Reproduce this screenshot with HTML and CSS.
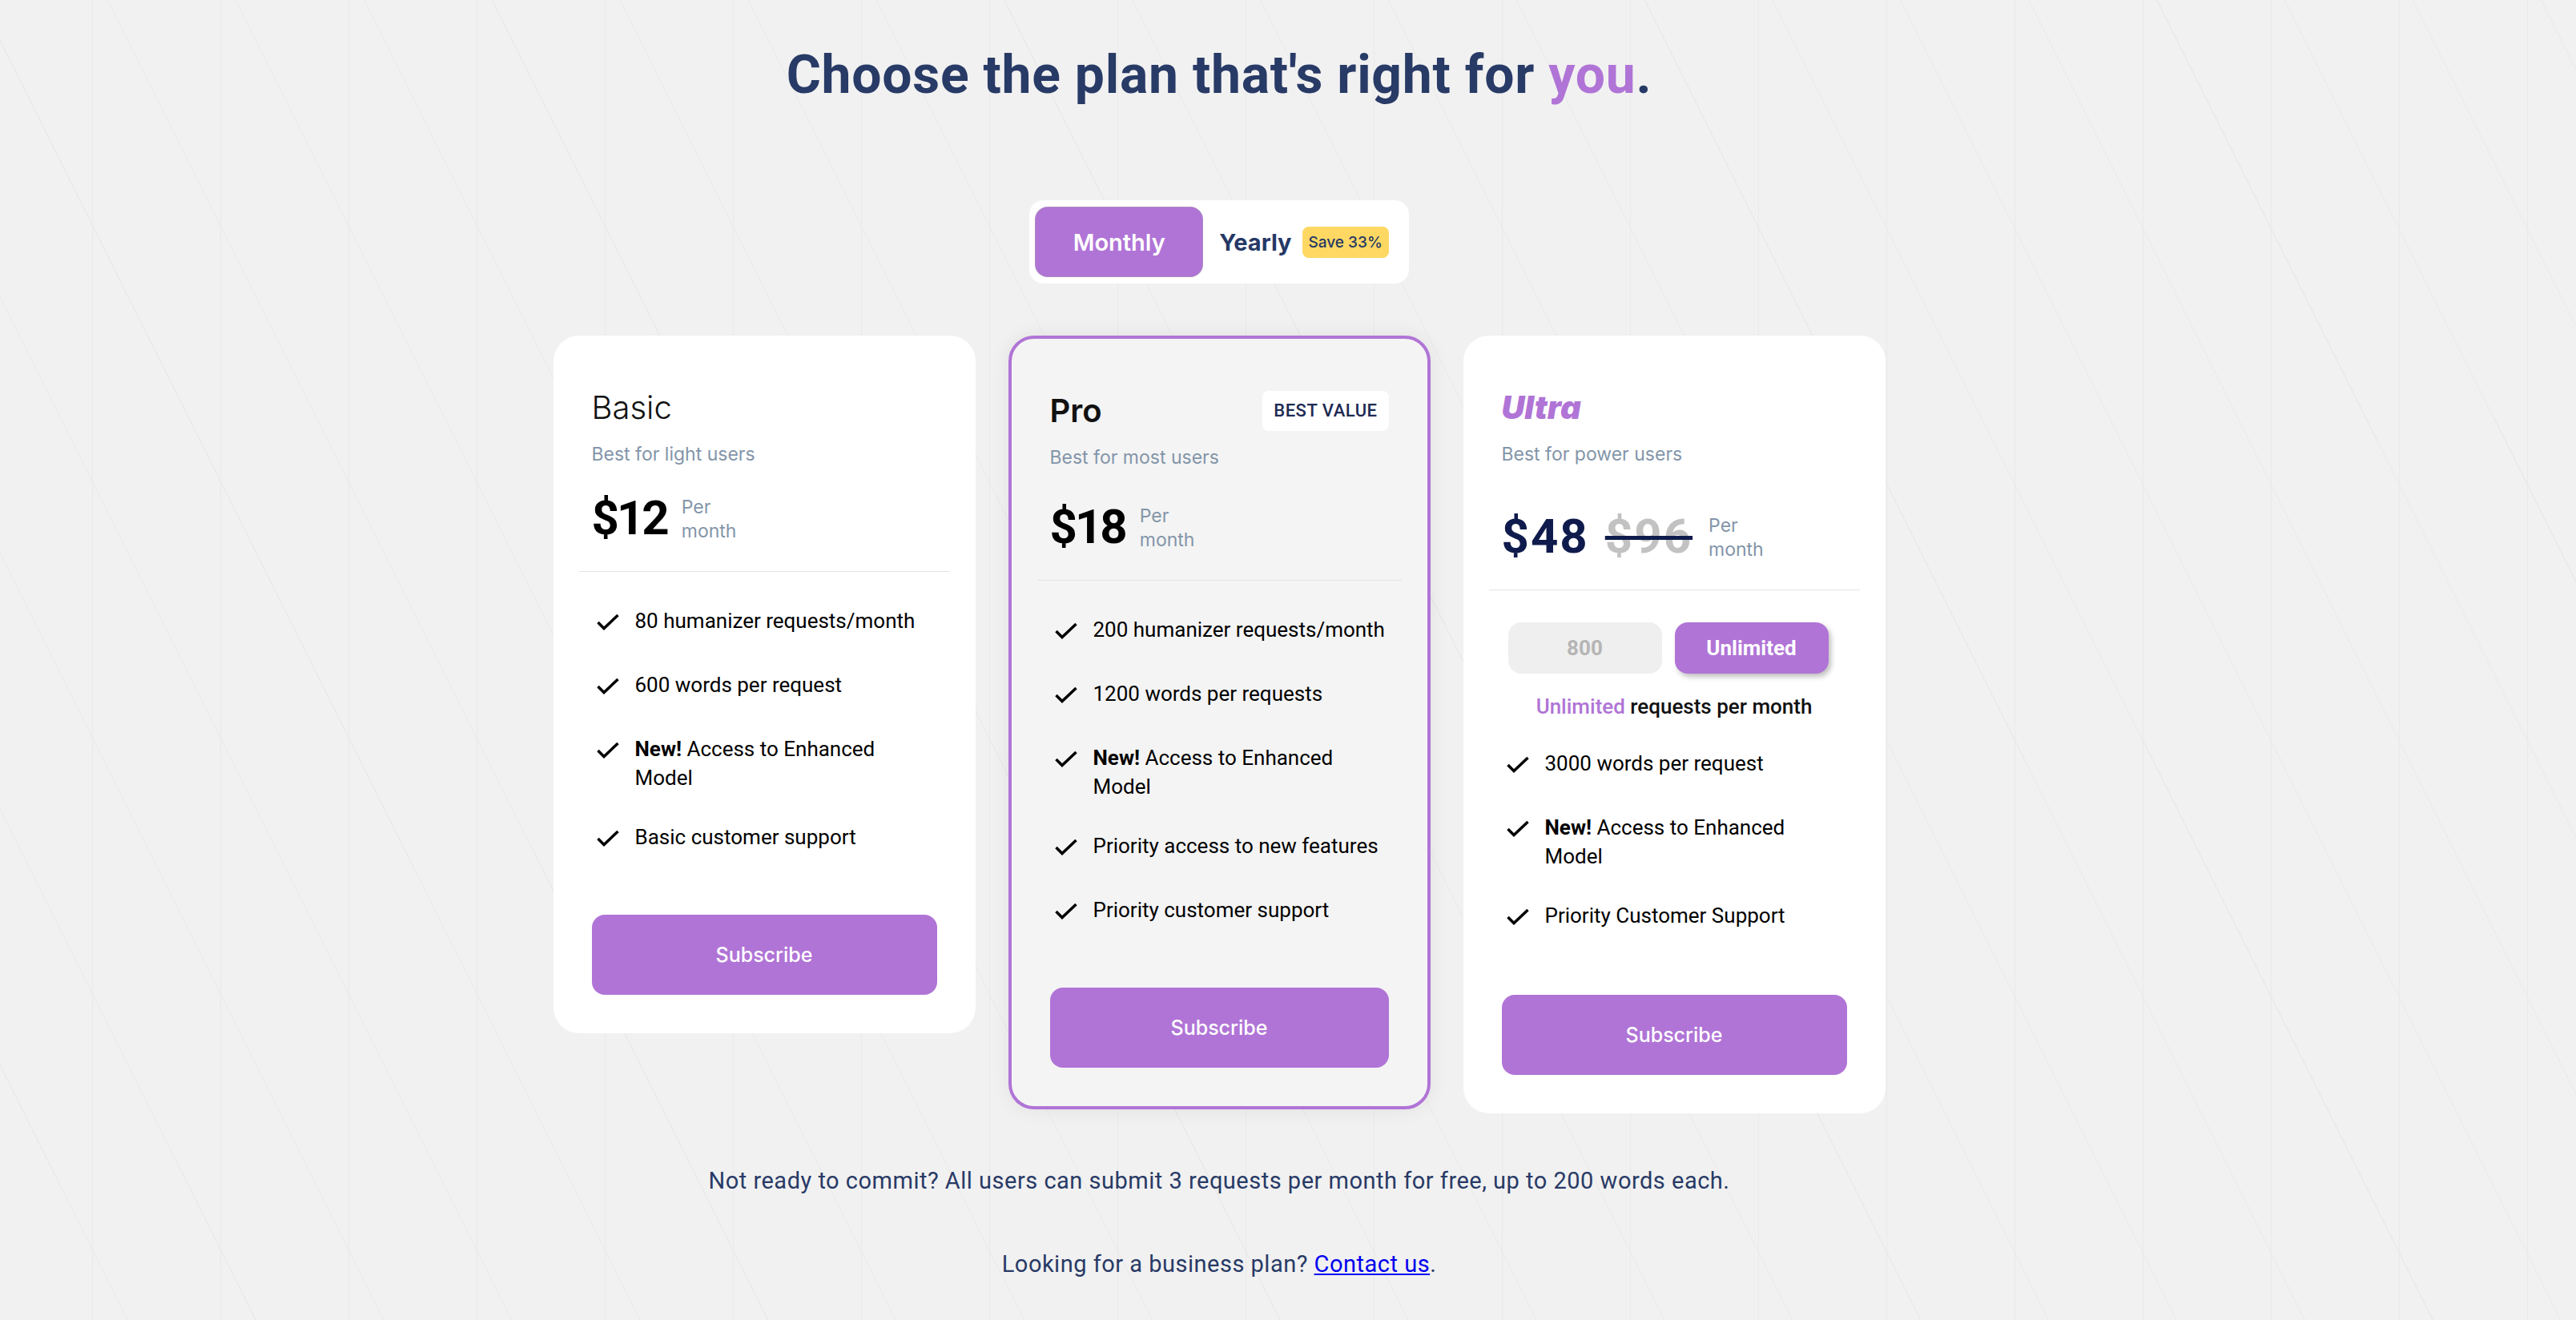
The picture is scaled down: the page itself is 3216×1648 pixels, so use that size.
FILE: index.html
```html
<!DOCTYPE html>
<html lang="en">
<head>
<meta charset="UTF-8">
<meta name="viewport" content="width=device-width, initial-scale=1.0">
<title>Pricing</title>
<link rel="stylesheet" href="styles.css">
</head>
<body>
    <main class="pricing">
        <h1 class="pricing-title">Choose the plan that's right for <span class="accent">you</span>.</h1>

        <div class="billing-toggle">
            <button class="billing-option active">Monthly</button>
            <button class="billing-option">Yearly</button>
            <span class="save-badge">Save 33%</span>
        </div>

        <div class="plans">
            <!-- Basic -->
            <div class="plan">
                <div class="plan-head">
                    <h2 class="plan-name">Basic</h2>
                </div>
                <p class="plan-tagline">Best for light users</p>
                <div class="plan-price">
                    <span class="price">$12</span>
                    <span class="price-period">Per<br>month</span>
                </div>
                <hr class="plan-divider">
                <ul class="plan-features">
                    <li><svg viewBox="0 0 40 42"><path d="M7.5 20 L15 27.5 L32.5 11"/></svg><span class="feature-text">80 humanizer requests/month</span></li>
                    <li><svg viewBox="0 0 40 42"><path d="M7.5 20 L15 27.5 L32.5 11"/></svg><span class="feature-text">600 words per request</span></li>
                    <li><svg viewBox="0 0 40 42"><path d="M7.5 20 L15 27.5 L32.5 11"/></svg><span class="feature-text"><b>New!</b> Access to Enhanced Model</span></li>
                    <li><svg viewBox="0 0 40 42"><path d="M7.5 20 L15 27.5 L32.5 11"/></svg><span class="feature-text">Basic customer support</span></li>
                </ul>
                <button class="subscribe-btn">Subscribe</button>
            </div>

            <!-- Pro -->
            <div class="plan plan-featured">
                <div class="plan-head">
                    <h2 class="plan-name">Pro</h2>
                    <span class="best-value">BEST VALUE</span>
                </div>
                <p class="plan-tagline">Best for most users</p>
                <div class="plan-price">
                    <span class="price">$18</span>
                    <span class="price-period">Per<br>month</span>
                </div>
                <hr class="plan-divider">
                <ul class="plan-features">
                    <li><svg viewBox="0 0 40 42"><path d="M7.5 20 L15 27.5 L32.5 11"/></svg><span class="feature-text">200 humanizer requests/month</span></li>
                    <li><svg viewBox="0 0 40 42"><path d="M7.5 20 L15 27.5 L32.5 11"/></svg><span class="feature-text">1200 words per requests</span></li>
                    <li><svg viewBox="0 0 40 42"><path d="M7.5 20 L15 27.5 L32.5 11"/></svg><span class="feature-text"><b>New!</b> Access to Enhanced Model</span></li>
                    <li><svg viewBox="0 0 40 42"><path d="M7.5 20 L15 27.5 L32.5 11"/></svg><span class="feature-text">Priority access to new features</span></li>
                    <li><svg viewBox="0 0 40 42"><path d="M7.5 20 L15 27.5 L32.5 11"/></svg><span class="feature-text">Priority customer support</span></li>
                </ul>
                <button class="subscribe-btn">Subscribe</button>
            </div>

            <!-- Ultra -->
            <div class="plan plan-ultra">
                <div class="plan-head">
                    <h2 class="plan-name">Ultra</h2>
                </div>
                <p class="plan-tagline">Best for power users</p>
                <div class="plan-price">
                    <span class="price">$48</span>
                    <span class="price price-old">$96</span>
                    <span class="price-period">Per<br>month</span>
                </div>
                <hr class="plan-divider">
                <div class="limit-toggle">
                    <button class="limit-option">800</button>
                    <button class="limit-option active">Unlimited</button>
                </div>
                <p class="limit-note"><span class="accent">Unlimited</span> requests per month</p>
                <ul class="plan-features">
                    <li><svg viewBox="0 0 40 42"><path d="M7.5 20 L15 27.5 L32.5 11"/></svg><span class="feature-text">3000 words per request</span></li>
                    <li><svg viewBox="0 0 40 42"><path d="M7.5 20 L15 27.5 L32.5 11"/></svg><span class="feature-text"><b>New!</b> Access to Enhanced Model</span></li>
                    <li><svg viewBox="0 0 40 42"><path d="M7.5 20 L15 27.5 L32.5 11"/></svg><span class="feature-text">Priority Customer Support</span></li>
                </ul>
                <button class="subscribe-btn">Subscribe</button>
            </div>
        </div>

        <p class="pricing-note">Not ready to commit? All users can submit 3 requests per month for free, up to 200 words each.</p>
        <p class="pricing-note business">Looking for a business plan? <a href="#">Contact us</a>.</p>
    </main>
</body>
</html>
```

FILE: styles.css
```css
* {
    box-sizing: border-box;
}

body {
    margin: 0;
    min-height: 100vh;
    font-family: Roboto, "Liberation Sans", sans-serif;
    background-color: #f1f1f1;
    background-image:
        linear-gradient(90deg, #e9e9e9 1px, transparent 1px),
        repeating-linear-gradient(63.43deg, transparent 0, transparent 142px, #e9e9e9 142px, #e9e9e9 143px);
    background-size: 160px 100%, auto;
    background-position: 115px 0, 0 0;
}

.pricing {
    display: flex;
    flex-direction: column;
    align-items: center;
    padding: 55px 172px 40px 0;
}

.pricing-title {
    margin: 0;
    font-size: 66px;
    line-height: 78px;
    font-weight: 700;
    letter-spacing: 0.75px;
    color: #283a66;
}

.accent {
    color: #b074d6;
}

/* billing switch */
.billing-toggle {
    display: flex;
    align-items: center;
    margin-top: 117px;
    padding: 8px 25px 8px 7px;
    background: #fff;
    border-radius: 18px;
}

.billing-option {
    padding: 0;
    border: none;
    background: none;
    font-family: Inter, sans-serif;
    font-size: 29px;
    font-weight: 700;
    color: #263865;
    cursor: pointer;
}

.billing-option.active {
    width: 210px;
    height: 88px;
    background: #b074d6;
    color: #fff;
    font-weight: 600;
    border: 1px dotted #a8a8a8;
    border-radius: 16px;
}

.billing-option + .billing-option {
    margin-left: 20px;
}

.save-badge {
    margin-left: 13px;
    height: 39px;
    padding: 0 8px;
    line-height: 39px;
    background: #fed863;
    border-radius: 8px;
    font-family: Inter, sans-serif;
    font-size: 19px;
    font-weight: 500;
    color: #263865;
}

/* cards */
.plans {
    display: flex;
    align-items: flex-start;
    gap: 41px;
    margin-top: 65px;
}

.plan {
    width: 527px;
    padding: 64px 48px 48px;
    background: #fff;
    border-radius: 32px;
}

.plan-featured {
    background: #f4f4f4;
    border: 4px solid #b074d6;
    box-shadow: 0 0 24px rgba(0, 0, 0, 0.07);
}

.plan-head {
    display: flex;
    justify-content: space-between;
    align-items: center;
    min-height: 52px;
}

.plan-name {
    margin: 0;
    font-family: Inter, sans-serif;
    font-size: 40px;
    line-height: 52px;
    font-weight: 300;
    color: #111;
}

.plan-featured .plan-name {
    font-weight: 600;
}

.plan-ultra .plan-name {
    font-weight: 900;
    font-style: italic;
    color: #b074d6;
}

.best-value {
    height: 50px;
    padding: 0 14px;
    line-height: 50px;
    background: #fff;
    border-radius: 8px;
    font-size: 22px;
    font-weight: 500;
    letter-spacing: 0.5px;
    color: #1d2a52;
}

.plan-tagline {
    margin: 16px 0 0;
    font-family: Inter, sans-serif;
    font-size: 23px;
    line-height: 32px;
    color: #8395a9;
}

.plan-price {
    display: flex;
    align-items: flex-start;
    gap: 18px;
    margin-top: 34px;
}

.plan-featured .plan-price {
    margin-top: 41px;
}

.plan-ultra .plan-price {
    margin-top: 57px;
    gap: 20px;
}

.price {
    font-size: 60px;
    line-height: 60px;
    font-weight: 700;
    letter-spacing: -3px;
    color: #000;
}

.plan-ultra .price {
    letter-spacing: 2px;
    color: #0f1b4c;
}

.plan-ultra .price-old {
    color: #c2c2c2;
    text-decoration: line-through;
    text-decoration-color: #0f1b4c;
    text-decoration-thickness: 5px;
}

.price-period {
    margin-top: 1px;
    font-family: Inter, sans-serif;
    font-size: 23px;
    line-height: 30px;
    color: #8395a9;
}

.plan-divider {
    height: 1px;
    margin: 35px -16px 0;
    border: 0;
    background: #e4e4e4;
}

.plan-features {
    display: flex;
    flex-direction: column;
    gap: 38px;
    margin: 43px -16px 0 0;
    padding: 0;
    list-style: none;
}

.plan-features li {
    display: flex;
    gap: 14px;
    min-height: 42px;
    font-size: 26px;
    line-height: 36px;
    color: #000;
}

.plan-features svg {
    flex-shrink: 0;
    width: 40px;
    height: 42px;
    fill: none;
    stroke: #000;
    stroke-width: 3.5;
}

.feature-text {
    max-width: 372px;
}

/* ultra request limit */
.limit-toggle {
    display: flex;
    gap: 16px;
    margin: 40px 0 0 8px;
}

.limit-option {
    width: 192px;
    height: 64px;
    border: none;
    border-radius: 16px;
    background: #efefef;
    font-family: Roboto, sans-serif;
    font-size: 26px;
    font-weight: 700;
    color: #b5b5b5;
}

.limit-option.active {
    background: #b074d6;
    color: #fff;
    box-shadow: 3px 4px 6px rgba(0, 0, 0, 0.25);
}

.limit-note {
    margin: 23px 0 0;
    text-align: center;
    font-size: 26px;
    line-height: 36px;
    font-weight: 500;
    color: #111;
}

.plan-ultra .plan-features {
    margin-top: 35px;
}

.subscribe-btn {
    display: block;
    width: 100%;
    height: 100px;
    margin-top: 73px;
    border: none;
    border-radius: 16px;
    background: #b074d6;
    font-family: Inter, sans-serif;
    font-size: 25px;
    font-weight: 500;
    color: #fff;
    cursor: pointer;
}

.plan-ultra .subscribe-btn {
    margin-top: 75px;
}

.pricing-note {
    margin: 64px 0 0;
    font-size: 29px;
    line-height: 40px;
    letter-spacing: 0.5px;
    color: #283a66;
}

.pricing-note.business {
    margin-top: 64px;
}

.pricing-note a {
    color: #0000ee;
}
```
